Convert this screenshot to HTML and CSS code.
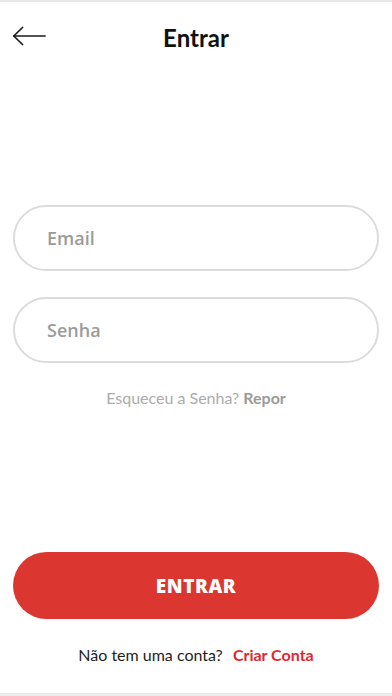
FILE: index.html
```html
<!DOCTYPE html>
<html lang="pt">
<head>
<meta charset="utf-8">
<title>Entrar</title>
<link rel="stylesheet" href="styles.css">
</head>
<body>
<div class="app">
  <header class="header">
    <button class="back" aria-label="Voltar">
      <svg width="34" height="20" viewBox="0 0 34 20" fill="none" stroke="#1a1a1a" stroke-width="1.7" stroke-linecap="round" stroke-linejoin="round">
        <path d="M33 10H1.8"/>
        <path d="M10.5 1.5L1.8 10L10.5 18.5"/>
      </svg>
    </button>
    <h1 class="title">Entrar</h1>
  </header>
  <main class="main">
    <form class="form">
      <input class="field" type="email" placeholder="Email">
      <input class="field" type="password" placeholder="Senha">
    </form>
    <p class="forgot">Esqueceu a Senha? <strong>Repor</strong></p>
    <div class="spacer"></div>
    <button class="submit">ENTRAR</button>
    <p class="signup">Não tem uma conta? <a class="signup-link" href="#">Criar Conta</a></p>
  </main>
</div>
</body>
</html>
```
FILE: styles.css
```css
* { box-sizing: border-box; }
html, body { margin: 0; padding: 0; background: #fff; }
body { font-family: Lato, "Open Sans", sans-serif; }

.app {
  height: 696px;
  display: flex;
  flex-direction: column;
  border-top: 2px solid #e9e9e9;
  border-bottom: 3px solid #ececec;
}

.header {
  height: 72px;
  display: flex;
  align-items: center;
  justify-content: center;
  position: relative;
}
.back {
  position: absolute;
  left: 12px;
  top: 24px;
  padding: 0;
  border: 0;
  background: none;
  display: flex;
}
.title {
  margin: 0;
  font-family: Lato, sans-serif;
  font-weight: 700;
  font-size: 24px;
  color: #111;
  line-height: 1;
}

.main {
  flex: 1;
  display: flex;
  flex-direction: column;
  padding: 0 13px;
}
.form {
  margin-top: 131px;
  display: flex;
  flex-direction: column;
  gap: 26px;
}
.field {
  height: 66px;
  width: 100%;
  border: 2px solid #dcdcdc;
  border-radius: 33px;
  padding: 0 20px 0 32px;
  font-family: "Open Sans", sans-serif;
  font-weight: 600;
  font-size: 18px;
  color: #333;
  outline: none;
  background: #fff;
}
.field::placeholder { color: #9b9b9b; }

.forgot {
  margin: 26px 0 0;
  height: 18px;
  line-height: 18px;
  text-align: center;
  font-size: 16px;
  color: #ababab;
}
.forgot strong { color: #9a9a9a; font-weight: 700; }

.spacer { flex: 1; }

.submit {
  height: 67px;
  width: 100%;
  border: 0;
  border-radius: 34px;
  background: #dc3630;
  color: #fff;
  font-family: "Open Sans", sans-serif;
  font-weight: 800;
  font-size: 19px;
  letter-spacing: 0.6px;
}

.signup {
  margin: 26px 0 28px;
  height: 20px;
  line-height: 20px;
  text-align: center;
  font-size: 16px;
  color: #1e1e1e;
}
.signup-link {
  margin-left: 6px;
  color: #e0282e;
  font-weight: 700;
  text-decoration: none;
}
```
